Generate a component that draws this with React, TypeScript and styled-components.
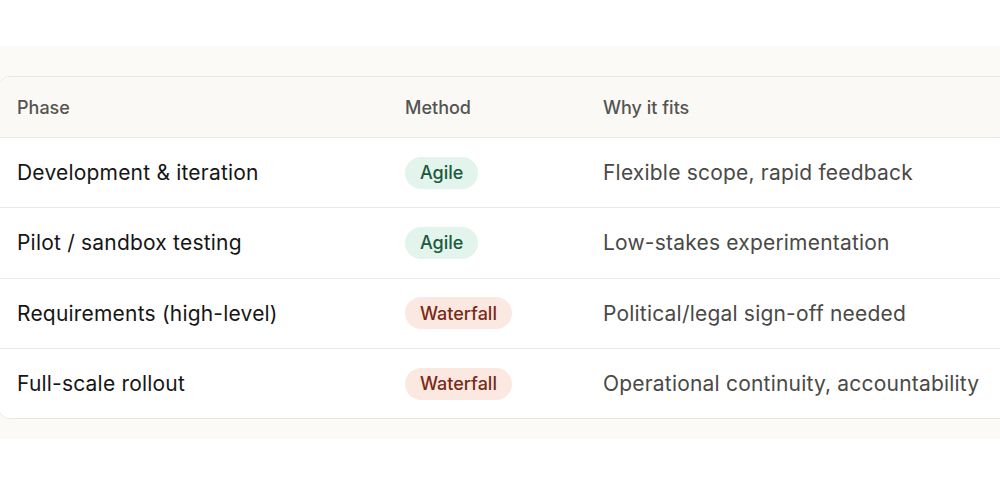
import styled, { createGlobalStyle } from "styled-components";

const GlobalStyle = createGlobalStyle`
  html, body {
    margin: 0;
    padding: 0;
    background: #ffffff;
    overflow: hidden;
  }
  body {
    font-family: Inter, "Noto Sans", sans-serif;
    -webkit-font-smoothing: antialiased;
  }
`;

const Page = styled.div`
  width: 1000px;
  height: 486px;
  padding-top: 46px;
  box-sizing: border-box;
`;

const Band = styled.section`
  background: #fbfaf7;
  padding: 30px 0 20px;
`;

const Card = styled.div`
  margin-left: -2px;
  width: 1040px;
  background: #ffffff;
  border: 1px solid #e8e6e0;
  border-radius: 12px;
  overflow: hidden;
`;

const Row = styled.div<{ $head?: boolean }>`
  display: grid;
  grid-template-columns: 388px 198px 1fr;
  align-items: center;
  height: ${(p) => (p.$head ? "60px" : "69.3px")};
  background: ${(p) => (p.$head ? "#faf9f6" : "#ffffff")};
  border-top: ${(p) => (p.$head ? "none" : "1px solid #ebe9e4")};
`;

const HeadCell = styled.div`
  padding: 0 18px;
  font-size: 18px;
  font-weight: 500;
  color: #555451;
`;

const Cell = styled.div<{ $muted?: boolean }>`
  padding: 0 18px;
  font-size: 21px;
  font-weight: 400;
  color: ${(p) => (p.$muted ? "#4a4946" : "#161616")};
  letter-spacing: 0.2px;
  white-space: nowrap;
`;

const Badge = styled.span<{ $kind: "agile" | "waterfall" }>`
  display: inline-flex;
  align-items: center;
  height: 32px;
  padding: 0 ${(p) => (p.$kind === "agile" ? "15px" : "15px")};
  border-radius: 16px;
  font-size: 18px;
  font-weight: 500;
  letter-spacing: 0;
  background: ${(p) => (p.$kind === "agile" ? "#e2f4ec" : "#fbe8e1")};
  color: ${(p) => (p.$kind === "agile" ? "#1b5a3e" : "#7a2a18")};
`;

const rows: { phase: string; method: "Agile" | "Waterfall"; why: string }[] = [
  { phase: "Development & iteration", method: "Agile", why: "Flexible scope, rapid feedback" },
  { phase: "Pilot / sandbox testing", method: "Agile", why: "Low-stakes experimentation" },
  { phase: "Requirements (high-level)", method: "Waterfall", why: "Political/legal sign-off needed" },
  { phase: "Full-scale rollout", method: "Waterfall", why: "Operational continuity, accountability" },
];

export default function App() {
  return (
    <Page>
      <GlobalStyle />
      <Band>
        <Card>
          <Row $head>
            <HeadCell>Phase</HeadCell>
            <HeadCell>Method</HeadCell>
            <HeadCell>Why it fits</HeadCell>
          </Row>
          {rows.map((r) => (
            <Row key={r.phase}>
              <Cell>{r.phase}</Cell>
              <Cell>
                <Badge $kind={r.method === "Agile" ? "agile" : "waterfall"}>{r.method}</Badge>
              </Cell>
              <Cell $muted>{r.why}</Cell>
            </Row>
          ))}
        </Card>
      </Band>
    </Page>
  );
}
